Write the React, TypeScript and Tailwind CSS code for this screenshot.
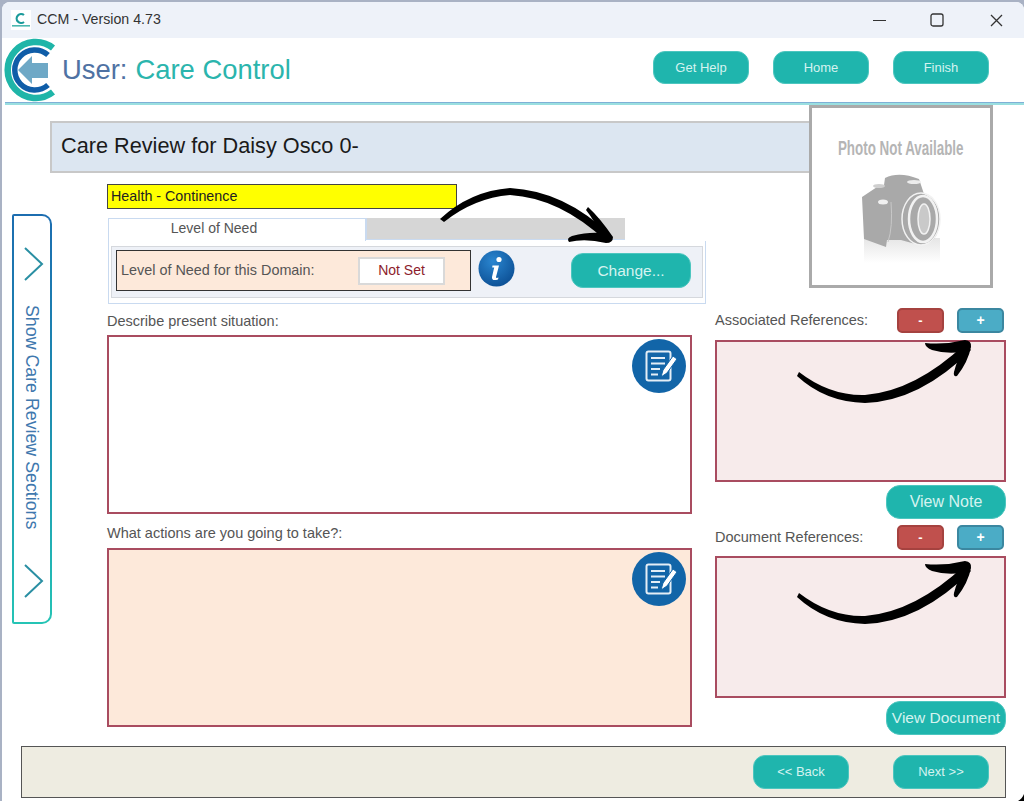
const tealBtn = "flex items-center justify-center bg-[#1fb5ad] text-[#d5f3f0] rounded-[12px] border border-[#4cc6bf]";

// big C logo with arrow
const Logo = () => (
  <svg width="54" height="66" viewBox="0 0 54 66" className="shrink-0">
    <path d="M50 11 A28 28 0 1 0 50 55" fill="none" stroke="#1fb5a8" strokeWidth="6.5" />
    <path d="M45 18 A20 20 0 1 0 45 48" fill="none" stroke="#0f5da8" strokeWidth="5.5" />
    <path d="M15 33 L29 19 V26 H45 V41 H29 V47 Z" fill="#6ea8c6" />
  </svg>
);

const SmallLogo = () => (
  <div className="w-[20px] h-[20px] bg-white flex items-center justify-center shrink-0">
    <svg width="20" height="20" viewBox="0 0 20 20">
      <path d="M13 5 A4.5 4.5 0 1 0 13 12" fill="none" stroke="#1a9a9a" strokeWidth="2.2" />
      <rect x="1" y="15" width="18" height="1.6" fill="#4cb8b0" />
    </svg>
  </div>
);

const Chevron = () => (
  <svg width="20" height="34" viewBox="0 0 20 34" className="shrink-0">
    <path d="M1 1 L18 17 L1 33" fill="none" stroke="#2a8fa3" strokeWidth="2" />
  </svg>
);

const EditIcon = () => (
  <svg width="54" height="54" viewBox="0 0 54 54">
    <circle cx="27" cy="27" r="27" fill="#1265a8" />
    <rect x="14.5" y="12.5" width="24" height="29" rx="2" fill="none" stroke="#e4eef6" strokeWidth="2" />
    <path d="M19 19 H33 M19 24.5 H33 M19 30 H28 M19 35.5 H26" stroke="#e4eef6" strokeWidth="2" />
    <path d="M29 38 L31 31 L41 17 L45 20 L35 34 Z" fill="#fff" stroke="#1265a8" strokeWidth="1" />
  </svg>
);

const InfoIcon = () => (
  <svg width="37" height="37" viewBox="0 0 37 37" className="shrink-0">
    <defs>
      <radialGradient id="infoBg" cx="40%" cy="30%" r="75%">
        <stop offset="0%" stopColor="#2a86d0" />
        <stop offset="100%" stopColor="#0c4f94" />
      </radialGradient>
    </defs>
    <circle cx="18.5" cy="18.5" r="18" fill="url(#infoBg)" />
    <circle cx="21" cy="9.5" r="2.6" fill="#fff" />
    <path d="M14.5 15.5 H21 L18 27 Q17.8 28.5 20.5 27.6 L20 29.5 Q13.5 31.5 14 27 L16.2 17.5 H14.2 Z" fill="#fff" />
  </svg>
);

const Camera = () => (
  <svg width="84" height="92" viewBox="0 0 84 92">
    <defs>
      <linearGradient id="camFade" x1="0" y1="0" x2="0" y2="1">
        <stop offset="0%" stopColor="#e6e6e6" />
        <stop offset="100%" stopColor="#ffffff" />
      </linearGradient>
    </defs>
    <rect x="3" y="66" width="76" height="25" fill="url(#camFade)" />
    <path d="M1 25 L16 15 L23 13 L24 6 Q38 -1 58 7 L63 22 Q78 28 79 47 Q78 73 58 73 L40 68 L26 68 L25 75 L3 67 Z" fill="#a9a9a9" />
    <ellipse cx="60" cy="47" rx="19" ry="26" fill="none" stroke="#f2f2f2" strokeWidth="1.5" />
    <ellipse cx="62" cy="47" rx="14" ry="23" fill="#a9a9a9" stroke="#f2f2f2" strokeWidth="2.5" />
    <ellipse cx="63" cy="47" rx="6" ry="15" fill="#c9c9c9" stroke="#f2f2f2" strokeWidth="1.5" />
    <ellipse cx="22" cy="30" rx="5" ry="2.5" fill="#f0f0f0" />
    <ellipse cx="18" cy="14" rx="6" ry="2" fill="#cfcfcf" />
    <ellipse cx="53" cy="10" rx="7" ry="2" fill="#ececec" />
    <path d="M30 30 Q32 55 27 70" fill="none" stroke="#c8c8c8" strokeWidth="1" />
  </svg>
);

const HeaderButton = ({ label }: { label: string }) => (
  <div className={`${tealBtn} w-[96px] h-[33px] text-[13px]`}>{label}</div>
);

const RefHeader = ({ label }: { label: string }) => (
  <div className="flex items-center h-[25px]">
    <span className="text-[14.5px] text-[#555] w-[182px]">{label}</span>
    <div className="w-[47px] h-[25px] rounded-[5px] bg-[#c0504d] border-2 border-[#a5423f] text-white text-[13px] font-bold flex items-center justify-center">-</div>
    <div className="w-[47px] h-[25px] ml-[13px] rounded-[5px] bg-[#4bacc6] border-2 border-[#3b87a0] text-white text-[14px] font-bold flex items-center justify-center">+</div>
  </div>
);

// brush style arrow sweeping up to the right, used on both reference lists
const SweepArrow = ({ dy }: { dy: number }) => (
  <g transform={`translate(0 ${dy})`}>
    <path d="M799 372 Q830 396 865 395 Q915 391 965 344 L971 350 Q920 401 865 403 Q825 402 797 376 Z" />
    <path d="M925 343 Q945 345 965 340 Q972 341 971 347 Q968 362 957 376 Q953 377 954 372 Q957 360 962 352 Q945 354 932 350 Q925 347 925 343 Z" />
  </g>
);

export default function App() {
  return (
    <div className="relative w-[1024px] h-[801px] overflow-hidden bg-[#a9b2c4] pt-[2px] pl-[2px] font-['Liberation_Sans',Arial,sans-serif]">
      <div className="w-[1022px] h-[799px] bg-white rounded-t-[8px] overflow-hidden">
        {/* title bar */}
        <div className="h-[36px] bg-[#eef2f9] flex items-center pl-[9px]">
          <SmallLogo />
          <span className="ml-[6px] text-[14.2px] text-[#333]">CCM - Version 4.73</span>
          <div className="ml-auto flex items-center pr-[21px]">
            <svg width="13" height="13" viewBox="0 0 13 13"><path d="M0 6.5 H13" stroke="#333" strokeWidth="1" /></svg>
            <svg width="14" height="14" viewBox="0 0 14 14" className="ml-[44px]"><rect x="1" y="1" width="12" height="12" rx="2" fill="none" stroke="#333" strokeWidth="1.3" /></svg>
            <svg width="13" height="13" viewBox="0 0 13 13" className="ml-[46px]"><path d="M1 1 L12 12 M12 1 L1 12" stroke="#333" strokeWidth="1.3" /></svg>
          </div>
        </div>

        {/* header */}
        <div className="h-[64px] flex items-center">
          <div className="ml-[1px]"><Logo /></div>
          <div className="ml-[5px] text-[27.4px] leading-none">
            <span className="text-[#4f72a3]">User:</span>
            <span className="text-[#2bb5ad] ml-[8px]">Care Control</span>
          </div>
          <div className="ml-auto flex gap-[24px] pr-[35px] self-start pt-[13px]">
            <HeaderButton label="Get Help" />
            <HeaderButton label="Home" />
            <HeaderButton label="Finish" />
          </div>
        </div>
        <div className="ml-[3px] h-[1px] bg-[#7fb0d6]"></div>
        <div className="ml-[3px] h-[2px] bg-[#9adfe0]"></div>

        {/* page title */}
        <div className="mt-[16px] ml-[48px] w-[770px] h-[52px] bg-[#dce6f1] border-2 border-[#c8c8c8] flex items-center pl-[9px] pb-[2px] text-[21.7px] text-[#1a1a1a]">
          Care Review for Daisy Osco 0-
        </div>

        <div className="flex items-start">
          {/* side tab */}
          <div className="ml-[10px] mt-[41px] w-[40px] h-[410px] p-[2px] rounded-r-[10px] rounded-l-[2px] bg-gradient-to-b from-[#1c6db0] via-[#1f8fb0] to-[#25c4b5]">
            <div className="w-full h-full bg-white rounded-r-[8px] flex flex-col items-center pt-[31px] pl-[3px]">
              <Chevron />
              <span className="mt-[24px] mr-[4px] h-[259px] text-[17.8px] leading-[22px] text-[#3f78ae] [writing-mode:vertical-rl] whitespace-nowrap">Show Care Review Sections</span>
              <Chevron />
            </div>
          </div>

          {/* main column */}
          <div className="ml-[55px] mt-[11px] w-[608px]">
            <div className="w-[350px] h-[25px] bg-[#ffff00] border border-[#444] flex items-center pl-[3px] text-[14.3px] text-[#222]">Health - Continence</div>
            <div className="flex mt-[9px] ml-[1px] h-[23px]">
              <div className="w-[258px] border border-b-0 border-[#c9daf0] bg-white text-[14px] text-[#555] flex items-center justify-center pr-[46px] pb-[3px]">Level of Need</div>
              <div className="w-[259px] h-[22px] bg-[#d6d6d6] border-l border-b border-[#c9daf0]"></div>
            </div>
            <div className="ml-[1px] w-[598px] h-[63px] border border-t-0 border-[#c9daf0] px-[2px] pt-[5px] pb-[4px]">
              <div className="h-[52px] bg-[#eef1f7] border border-[#d5d8dd] flex items-start pl-[4px] pt-[3px]">
                <div className="w-[355px] h-[41px] bg-[#fde9da] border border-[#333] flex items-center pl-[4px] text-[14.4px] text-[#555]">
                  <span>Level of Need for this Domain:</span>
                  <div className="ml-auto mr-[25px] w-[87px] h-[28px] bg-white border-2 border-[#d9d9d9] flex items-center justify-center text-[#8c1c2c] text-[14px]">Not Set</div>
                </div>
                <div className="ml-[7px]"><InfoIcon /></div>
                <div className={`${tealBtn} ml-[56px] mt-[3px] w-[120px] h-[35px] text-[15.5px]`}>Change...</div>
              </div>
            </div>

            <div className="mt-[9px] h-[17px] leading-[17px] text-[14.5px] text-[#555]">Describe present situation:</div>
            <div className="mt-[5px] w-[585px] h-[179px] bg-white border-2 border-[#a94c60] flex justify-end pt-[2px] pr-[4px]">
              <div><EditIcon /></div>
            </div>
            <div className="mt-[11px] h-[17px] leading-[17px] text-[14.5px] text-[#555]">What actions are you going to take?:</div>
            <div className="mt-[6px] w-[585px] h-[179px] bg-[#fde9da] border-2 border-[#a94c60] flex justify-end pt-[2px] pr-[4px]">
              <div><EditIcon /></div>
            </div>
          </div>

          {/* references column */}
          <div className="mt-[135px] w-[291px]">
            <RefHeader label="Associated References:" />
            <div className="mt-[7px] h-[142px] bg-[#f7ebeb] border-2 border-[#a94c60]"></div>
            <div className={`${tealBtn} mt-[3px] ml-auto w-[120px] h-[34px] text-[16px] rounded-[14px]`}>View Note</div>
            <div className="mt-[6px]"><RefHeader label="Document References:" /></div>
            <div className="mt-[6px] h-[142px] bg-[#f7ebeb] border-2 border-[#a94c60]"></div>
            <div className={`${tealBtn} mt-[3px] ml-auto w-[120px] h-[34px] text-[15.5px] rounded-[14px]`}>View Document</div>
          </div>
        </div>

        {/* footer */}
        <div className="mt-[11px] ml-[19px] w-[985px] h-[52px] bg-[#eeece1] border border-[#555] flex items-center justify-end gap-[44px] pr-[16px]">
          <div className={`${tealBtn} w-[96px] h-[34px] text-[13px]`}>{"<< Back"}</div>
          <div className={`${tealBtn} w-[96px] h-[34px] text-[13px]`}>{"Next >>"}</div>
        </div>
      </div>

      {/* photo placeholder */}
      <div className="absolute left-[809px] top-[105px] w-[184px] h-[183px] bg-white border-[3px] border-[#aaa] flex flex-col items-center pt-[28px]">
        <span className="font-bold text-[20px] leading-[24px] text-[#b5b5b5] whitespace-nowrap scale-x-[0.67]">Photo Not Available</span>
        <div className="mt-[12px] ml-[4px]"><Camera /></div>
      </div>

      {/* hand drawn arrows */}
      <svg className="absolute left-0 top-0 pointer-events-none" width="1024" height="801" viewBox="0 0 1024 801" fill="#000">
        <path d="M440 219 Q470 191 510 188 Q565 191 610 235 L606 241 Q560 198 510 195 Q474 198 444 222 Z" />
        <path d="M588 207 Q600 218 613 237 Q613 243 606 243 Q585 238 569 242 Q566 238 572 236 Q588 232 600 233 Q594 220 586 210 Z" />
        <SweepArrow dy={0} />
        <SweepArrow dy={221} />
        <path d="M1024 794 V801 H1018 Q1022 799 1024 794 Z" />
      </svg>
    </div>
  );
}
